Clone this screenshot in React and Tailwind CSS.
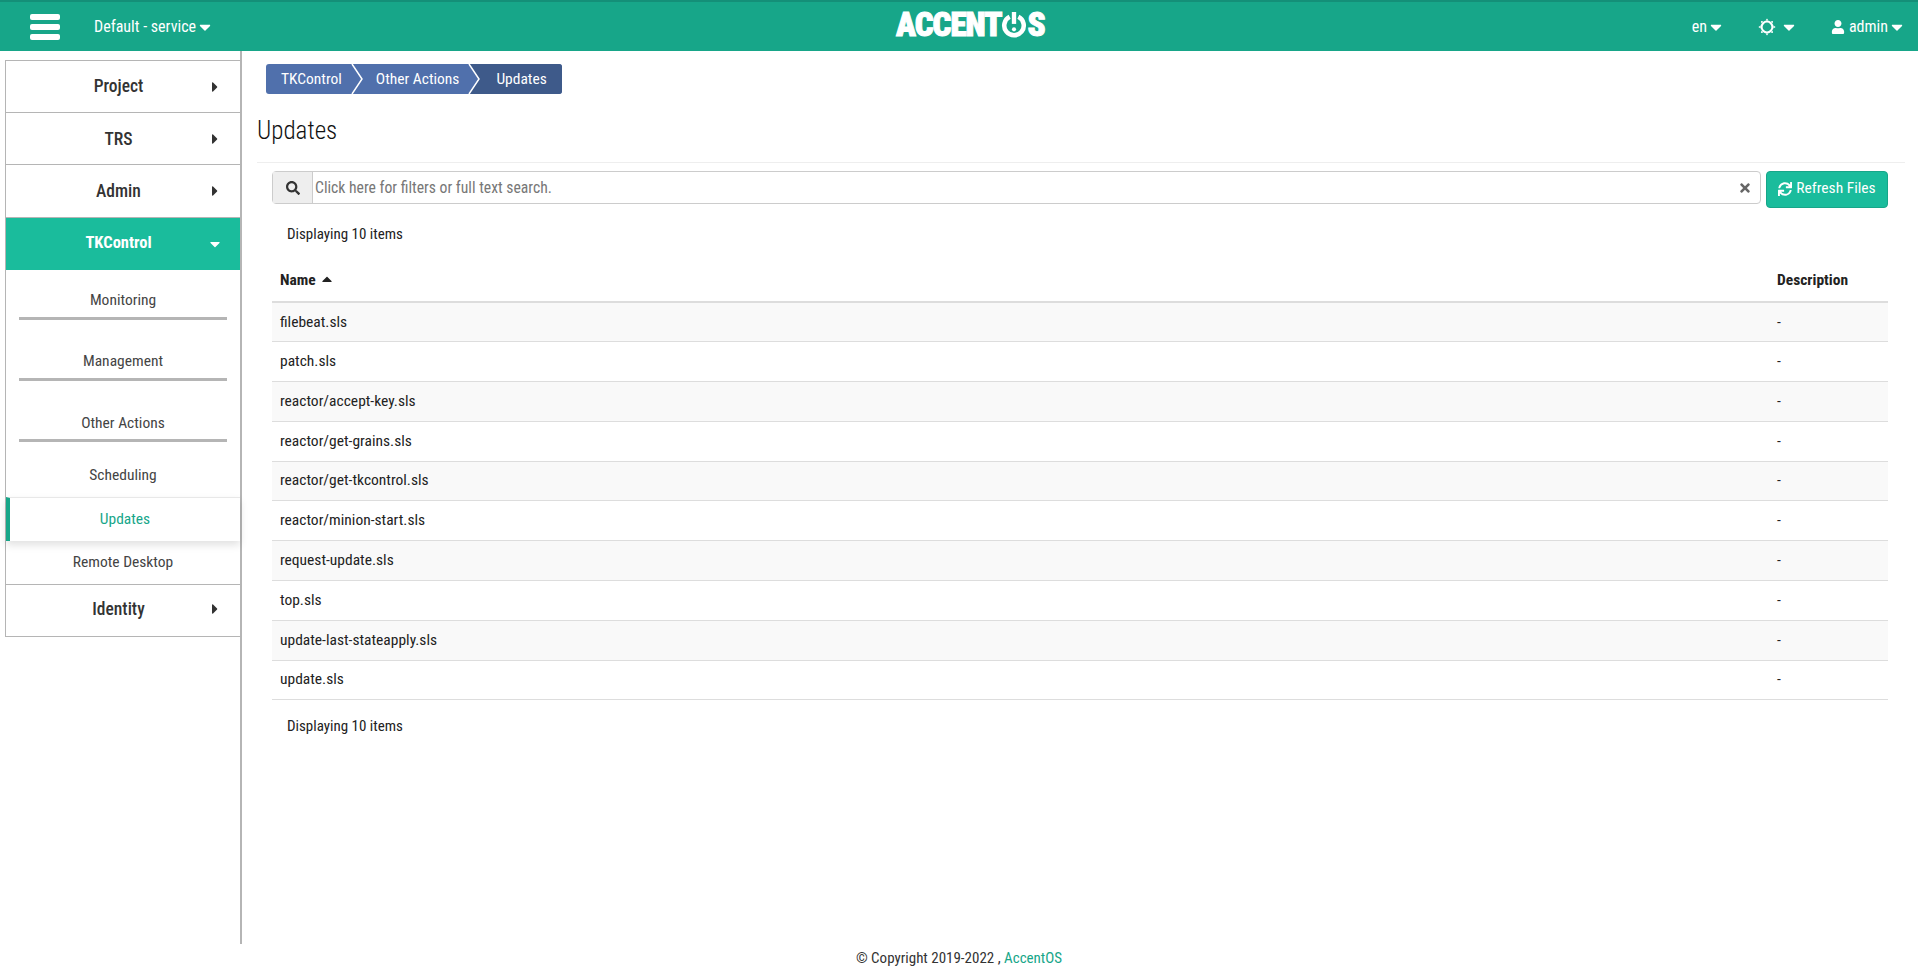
import { FaCaretDown, FaCaretRight, FaCaretUp, FaSearch, FaSync, FaTimes, FaUser } from 'react-icons/fa';

const files = [
  'filebeat.sls',
  'patch.sls',
  'reactor/accept-key.sls',
  'reactor/get-grains.sls',
  'reactor/get-tkcontrol.sls',
  'reactor/minion-start.sls',
  'request-update.sls',
  'top.sls',
  'update-last-stateapply.sls',
  'update.sls',
];

const TopItem = ({ label }) => (
  <div className="flex h-[52.2px] items-center border-b border-[#b5b5b5] pl-[3px]">
    <span className="w-[219px] text-center text-[17.5px] font-medium text-[#333]">{label}</span>
    <FaCaretRight className="ml-[-21px] text-[16px] text-[#333]" />
  </div>
);

const SubGroup = ({ label, className = '' }) => (
  <div className={`mx-[13px] border-b-[3px] border-[#b5b5b5] text-center text-[15.5px] leading-[22px] text-[#444] ${className}`}>{label}</div>
);

const LogoMark = () => (
  <svg width="26" height="26" viewBox="0 0 24 24" className="shrink-0">
    <path d="M8 4.4a9 9 0 1 0 8 0" fill="none" stroke="white" strokeWidth="4.2" />
    <rect x="10" y="0" width="4" height="11" fill="white" />
    <circle cx="12" cy="16" r="1.9" fill="white" />
  </svg>
);

// ring with eight short teeth, the header's settings icon
const SunIcon = () => (
  <svg width="18" height="18" viewBox="0 0 18 18" className="shrink-0">
    <circle cx="9" cy="9" r="5.4" fill="none" stroke="white" strokeWidth="2" />
    {[0, 45, 90, 135, 180, 225, 270, 315].map((deg) => (
      <path key={deg} d="M7.6 2.6L9 0.4l1.4 2.2z" fill="white" transform={`rotate(${deg} 9 9)`} />
    ))}
  </svg>
);

export default function App() {
  return (
    <div className="flex min-h-[973px] flex-col bg-white font-['Liberation_Sans_Narrow','Roboto_Condensed','Liberation_Sans',sans-serif] text-[15px] text-[#222]">
      <header className="relative flex h-[51px] items-center border-t-2 border-[#148f78] bg-[#17a689] text-white">
        <div className="ml-[30px] flex w-[30px] flex-col gap-[4px]">
          <span className="h-[6px] rounded-[2px] bg-white" />
          <span className="h-[6px] rounded-[2px] bg-white" />
          <span className="h-[6px] rounded-[2px] bg-white" />
        </div>
        <div className="ml-[34px] flex items-center text-[16px]">
          Default - service <FaCaretDown className="text-[18px]" />
        </div>
        <div className="absolute left-[896px] top-[10px] flex h-[26px] items-center text-[33px] leading-[26px] font-black tracking-[-1px] [-webkit-text-stroke:1px_white]">
          ACCENT<LogoMark />S
        </div>
        <div className="ml-auto mr-[12px] flex items-center text-[16px]">
          <span className="flex items-center">en <FaCaretDown className="text-[18px]" /></span>
          <span className="ml-[33px] flex items-center gap-[4px]"><SunIcon /> <FaCaretDown className="text-[18px]" /></span>
          <span className="ml-[33px] flex items-center"><FaUser className="mr-[4px] text-[14px]" /> admin <FaCaretDown className="text-[18px]" /></span>
        </div>
      </header>

      <div className="flex h-[893px]">
        <aside className="w-[242px] shrink-0 border-r-2 border-[#b5b5b5] pt-[9px] pl-[5px]">
          <div className="border-y border-l border-[#b5b5b5]">
            <TopItem label="Project" />
            <TopItem label="TRS" />
            <TopItem label="Admin" />
            <div className="flex h-[52.2px] items-center bg-[#1abc9c] pl-[3px] text-white">
              <span className="w-[219px] text-center text-[16.5px] font-bold">TKControl</span>
              <FaCaretDown className="ml-[-21px] text-[16px]" />
            </div>
            <SubGroup label="Monitoring" className="pt-[19px] pb-[6px]" />
            <SubGroup label="Management" className="pt-[30px] pb-[6px]" />
            <SubGroup label="Other Actions" className="pt-[31px] pb-[5px]" />
            <div className="flex h-[55px] items-end justify-center pb-[10px] text-[15.5px] text-[#444]">Scheduling</div>
            <div className="flex h-[44px] items-center justify-center border-t border-l-4 border-t-[#e8e8e8] border-l-[#17a689] text-[15.5px] text-[#17a689] shadow-[0_4px_8px_rgba(0,0,0,0.12)]">Updates</div>
            <div className="flex h-[44px] items-center justify-center border-b border-[#b5b5b5] text-[15.5px] text-[#444]">Remote Desktop</div>
            <div className="flex h-[51px] items-center pb-[2px] pl-[3px]">
              <span className="w-[219px] text-center text-[17.5px] font-medium text-[#333]">Identity</span>
              <FaCaretRight className="ml-[-21px] text-[16px] text-[#333]" />
            </div>
          </div>
        </aside>

        <main className="min-w-0 flex-1 pt-[13px] pl-[15px] pr-[13px]">
          <nav className="ml-[9px] flex h-[30px] w-[296px] items-center overflow-hidden rounded-[3px] bg-[#5070ac] pt-[1px] text-[15.5px] text-white">
            <span className="pl-[15px]">TKControl</span>
            <svg width="14" height="30" viewBox="0 0 14 30" className="ml-[9px] shrink-0 mt-[-1px]"><path d="M1 0l10 15L1 30" fill="none" stroke="white" strokeWidth="1.5" /></svg>
            <span className="pl-[11px]">Other Actions</span>
            <div className="mt-[-1px] ml-[9px] flex h-[30px] flex-1 items-center bg-[#3e5a8a]">
              <svg width="14" height="30" viewBox="0 0 14 30" className="shrink-0"><path d="M0 0h1l10 15L1 30H0z" fill="#5070ac" /><path d="M1 0l10 15L1 30" fill="none" stroke="white" strokeWidth="1.5" /></svg>
              <span className="pl-[14px] pt-[1px]">Updates</span>
            </div>
          </nav>
          <h1 className="mt-[22px] text-[25px] leading-[30px] font-light text-[#111]">Updates</h1>
          <div className="mt-[16px] border-t border-[#eee]" />
          <div className="pl-[15px] pr-[17px]">
            <div className="mt-[8px] flex items-start gap-[5px]">
              <div className="flex h-[33px] flex-1 items-center rounded-[4px] border border-[#ccc]">
                <span className="flex h-full w-[40px] items-center justify-center border-r border-[#ccc] bg-[#eee] text-[14px] text-[#333]"><FaSearch /></span>
                <span className="ml-[2px] flex-1 text-[15.7px] text-[#777]">Click here for filters or full text search.</span>
                <FaTimes className="mr-[8px] text-[14px] text-[#666]" />
              </div>
              <button className="flex h-[37px] w-[122px] items-center justify-center gap-[4px] rounded-[4px] border border-[#17a689] bg-[#1abc9c] pb-[2px] text-[15.5px] text-white">
                <FaSync className="text-[14px]" /> Refresh Files
              </button>
            </div>
            <div className="mt-[16px] pl-[15px] text-[15px] leading-[20px]">Displaying 10 items</div>
            <table className="mt-[14px] w-full border-collapse text-left text-[15.5px]">
              <thead>
                <tr className="h-[44px] border-b-2 border-[#ddd]">
                  <th className="pt-[2px] pl-[8px] font-bold">
                    <span className="inline-flex items-center gap-[3px]">Name <FaCaretUp className="mb-[4px] text-[16px]" /></span>
                  </th>
                  <th className="w-[111px] pt-[2px] font-bold">Description</th>
                </tr>
              </thead>
              <tbody>
                {files.map((name, i) => (
                  <tr key={name} className={`h-[39.8px] border-b border-[#ddd] ${i % 2 === 0 ? 'bg-[#f9f9f9]' : ''}`}>
                    <td className="pl-[8px]">{name}</td>
                    <td>-</td>
                  </tr>
                ))}
              </tbody>
            </table>
            <div className="mt-[16px] pl-[15px] text-[15px] leading-[20px]">Displaying 10 items</div>
          </div>
        </main>
      </div>

      <footer className="flex h-[29px] items-center justify-center pb-[1px] text-[15px] text-[#333]">
        © Copyright 2019-2022 ,&nbsp;<span className="text-[#17a689]">AccentOS</span>
      </footer>
    </div>
  );
}
